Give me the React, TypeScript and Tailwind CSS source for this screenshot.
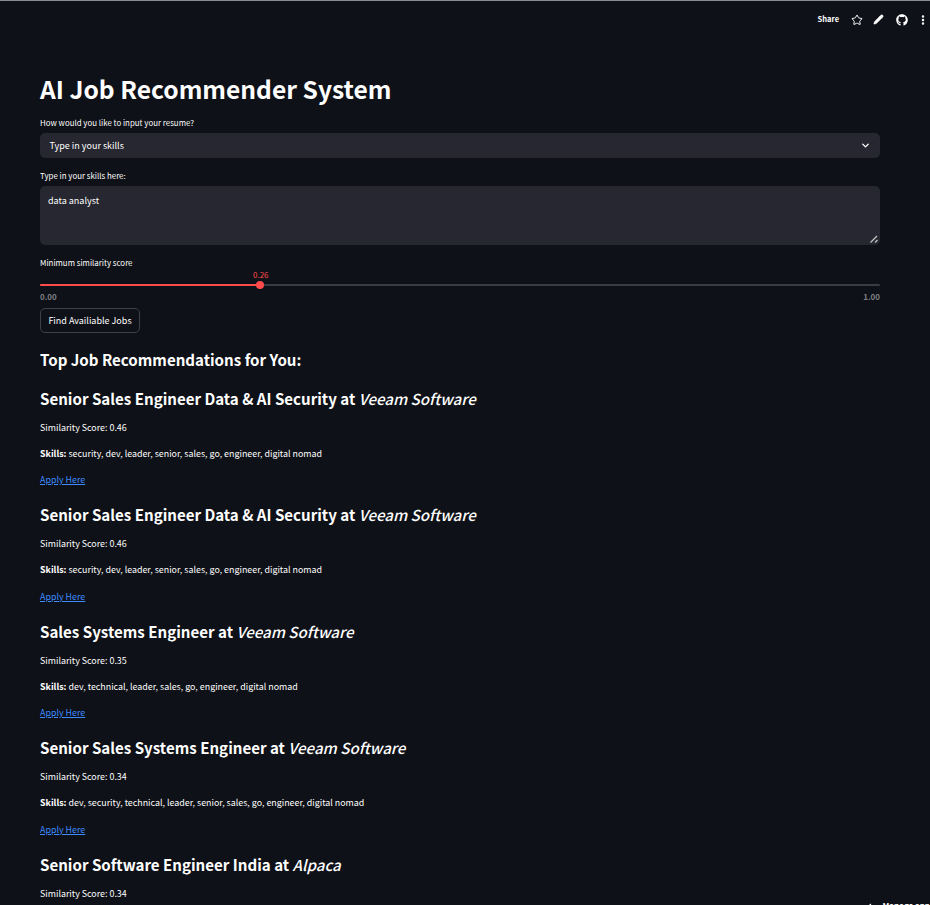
import { ChevronDown, EllipsisVertical, Pencil, Star, ChevronLeft } from "lucide-react";
import { FaGithub } from "react-icons/fa";

const jobs = [
  { title: "Senior Sales Engineer Data & AI Security", company: "Veeam Software", score: "0.46", skills: "security, dev, leader, senior, sales, go, engineer, digital nomad" },
  { title: "Senior Sales Engineer Data & AI Security", company: "Veeam Software", score: "0.46", skills: "security, dev, leader, senior, sales, go, engineer, digital nomad" },
  { title: "Sales Systems Engineer", company: "Veeam Software", score: "0.35", skills: "dev, technical, leader, sales, go, engineer, digital nomad" },
  { title: "Senior Sales Systems Engineer", company: "Veeam Software", score: "0.34", skills: "dev, security, technical, leader, senior, sales, go, engineer, digital nomad" },
  { title: "Senior Software Engineer India", company: "Alpaca", score: "0.34", skills: "" },
];

function Label({ children }: { children: string }) {
  return <div className="h-[10px] flex items-center text-[7.9px] leading-[10px] text-white">{children}</div>;
}

export default function App() {
  return (
    <div className="relative h-[905px] overflow-hidden bg-[#0e1117] text-white border-t border-[#8a8c90] font-['Noto_Sans_CJK_SC','Source_Sans_Pro',sans-serif]">
      <header className="h-[35px] flex items-center justify-end pr-[1px] pt-[2px]">
        <span className="text-[7.5px] font-semibold mr-[12px] mb-[2px]">Share</span>
        <Star className="w-[12px] h-[12px] mr-[10px]" strokeWidth={2} />
        <Pencil className="w-[11px] h-[11px] fill-white mr-[12px]" strokeWidth={1.5} />
        <FaGithub className="w-[12px] h-[12px] mr-[9px]" />
        <EllipsisVertical className="w-[12px] h-[12px]" strokeWidth={3} />
      </header>

      <main className="pl-[40px] pr-[50px]">
        <h1 className="mt-[32px] h-[40px] flex items-center text-[24.6px] leading-[40px] font-bold">AI Job Recommender System</h1>

        <div className="mt-[10px]">
          <Label>How would you like to input your resume?</Label>
          <div className="mt-[5px] h-[25px] rounded-[5px] bg-[#262730] flex items-center justify-between pl-[9.5px] pr-[9px] text-[9px]">
            <span>Type in your skills</span>
            <ChevronDown className="w-[11px] h-[11px]" strokeWidth={3} />
          </div>
        </div>

        <div className="mt-[13px]">
          <Label>Type in your skills here:</Label>
          <div className="relative mt-[5px] h-[59px] rounded-[5px] bg-[#262730] pl-[8px] pt-[8px] text-[9px] leading-[14px]">
            data analyst
            <svg className="absolute right-[2px] bottom-[2px] w-[8px] h-[8px]" viewBox="0 0 8 8">
              <path d="M0.5 7.5 L7 1" stroke="#c4c4c4" strokeWidth="1.2" />
              <path d="M5 7.5 L7.5 5" stroke="#c4c4c4" strokeWidth="1.2" />
            </svg>
          </div>
        </div>

        <div className="mt-[13px]">
          <Label>Minimum similarity score</Label>
          <div className="relative mt-[16px] h-[2px] bg-[#3a3b44] rounded-full">
            <div className="h-full w-[220px] bg-[#ff4b4b] rounded-full" />
            <div className="absolute left-[216px] top-[-3px] w-[8px] h-[8px] rounded-full bg-[#ff4b4b]" />
            <div className="absolute left-[213px] top-[-14px] text-[8px] leading-[10px] text-[#ff4b4b]">0.26</div>
          </div>
          <div className="mt-[6px] flex justify-between text-[8px] leading-[10px] font-semibold text-[#7d7f85]">
            <span>0.00</span>
            <span>1.00</span>
          </div>
        </div>

        <button className="mt-[6px] h-[25px] w-[100px] rounded-[5px] border border-[#3f414a] text-[9px] flex items-center justify-center">
          Find Availiable Jobs
        </button>

        <h3 className="mt-[13px] h-[26px] flex items-center text-[15.1px] leading-[26px] font-semibold">Top Job Recommendations for You:</h3>

        <div className="mt-[12.6px] flex flex-col gap-[22px]">
          {jobs.map((job, i) => (
            <section key={i} className="h-[94.5px]">
              <h3 className="h-[26px] flex items-center text-[15.1px] leading-[26px] font-semibold whitespace-pre">
                {job.title} at <em className="italic font-medium">{job.company}</em>
              </h3>
              <p className="mt-[10px] h-[14px] text-[8.9px] leading-[14px]">Similarity Score: {job.score}</p>
              {job.skills && (
                <>
                  <p className="mt-[12px] h-[14px] text-[8.9px] leading-[14px]">
                    <strong className="font-bold">Skills:</strong> {job.skills}
                  </p>
                  <a href="#" className="block mt-[12.5px] h-[14px] w-fit text-[8.9px] leading-[14px] text-[#3d8bfd] underline">Apply Here</a>
                </>
              )}
            </section>
          ))}
        </div>
      </main>

      <div className="absolute right-[0px] bottom-[-6px] flex items-center gap-[8px] text-[8px] leading-[10px] font-semibold">
        <ChevronLeft className="w-[9px] h-[9px]" strokeWidth={3} />
        <span>Manage app</span>
      </div>
    </div>
  );
}
